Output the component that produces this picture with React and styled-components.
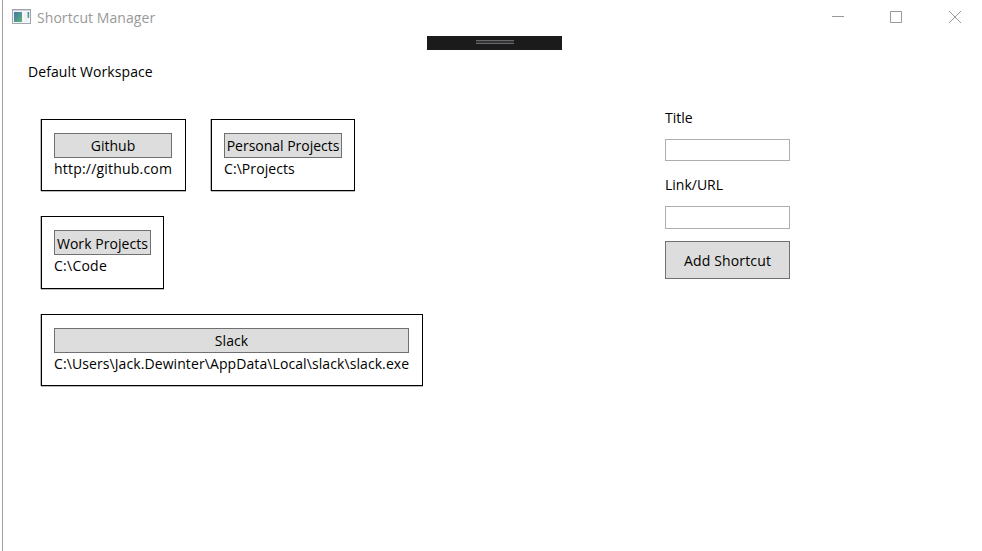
import React from 'react';
import styled, { createGlobalStyle } from 'styled-components';

const GlobalStyle = createGlobalStyle`
  *, *::before, *::after { box-sizing: border-box; }
  body { margin: 0; background: #fff; overflow: hidden; }
  body, button, input { font-family: 'Open Sans', 'Noto Sans', sans-serif; font-size: 14px; color: #000; }
`;

const Window = styled.div`
  height: 551px;
  width: 980px;
  margin-left: 2px;
  border-left: 1px solid #a0a0a0;
  display: flex;
  flex-direction: column;
`;

const TitleBar = styled.header`
  height: 36px;
  display: flex;
  align-items: flex-start;
  padding-left: 9px;
`;

const AppIcon = styled.svg`
  display: block;
  flex: none;
  width: 19px;
  height: 16px;
  margin-top: 9px;
`;

const Label = styled.span`
  display: block;
  width: max-content;
  height: 20px;
  line-height: 20px;
  white-space: pre;
  letter-spacing: ${(p) => p.$track || 0}px;
`;

const WindowTitle = styled(Label)`
  color: #999;
  margin: 8px 0 0 6px;
`;

const WindowControls = styled.div`
  display: flex;
  margin-left: auto;
  gap: 46px;
  padding: 11px 21px 0 0;
`;

const ControlIcon = styled.svg`
  display: block;
  width: 12px;
  height: 12px;
  fill: none;
  stroke: #999;

  &:last-child { margin-left: 1px; }
`;

const DebugBar = styled.div`
  width: 135px;
  height: 14px;
  margin-left: 424px;
  background: #1b1b1c;
  display: flex;
  justify-content: center;
  padding-top: 4px;
`;

const Grip = styled.div`
  width: 38px;
  height: 4px;
  background: #333337;
  border-top: 1px solid #686868;
  border-bottom: 1px solid #686868;
`;

const Content = styled.main`
  display: flex;
  flex: 1;
  padding-left: 25px;
`;

const Workspace = styled.section`
  width: 637px;
  padding-top: 12px;
`;

const CardList = styled.div`
  display: flex;
  flex-direction: column;
  gap: 25px;
  padding: 37px 0 0 13px;
`;

const CardRow = styled.div`
  display: flex;
  gap: 25px;
`;

const Card = styled.article`
  width: ${(p) => p.$width}px;
  height: ${(p) => p.$height}px;
  border: 1px solid #000;
  box-shadow: -1px 0 0 #bbb, 0 1px 0 #bbb;
  padding: 13px ${(p) => p.$inset}px 13px 12px;
`;

const LaunchButton = styled.button`
  display: flex;
  justify-content: center;
  align-items: center;
  width: 100%;
  height: 25px;
  padding: ${(p) => p.$drop || 0}px 0 0;
  border: 1px solid #707070;
  background: #ddd;
`;

const Target = styled(Label)`
  margin-top: 1px;
`;

const Form = styled.form`
  width: 125px;
  padding-top: 58px;
`;

const Field = styled.input`
  display: block;
  width: 125px;
  height: ${(p) => p.$height}px;
  margin: 11px 0 ${(p) => p.$gap}px;
  border: 1px solid #abadb3;
  background: #fff;
  padding: 0 3px;
  outline: none;
`;

const AddButton = styled(LaunchButton)`
  height: 38px;
`;

const rows = [
  [
    { name: 'Github', target: 'http://github.com', width: 145, height: 72, inset: 13, targetTrack: 0.2 },
    { name: 'Personal Projects', target: 'C:\\Projects', width: 144, height: 72, inset: 12, nameTrack: -0.02, targetTrack: 0.08 },
  ],
  [
    { name: 'Work Projects', target: 'C:\\Code', width: 123, height: 73, inset: 12, nameTrack: 0.06, targetTrack: 0.25, nameDrop: 2 },
  ],
  [
    { name: 'Slack', target: 'C:\\Users\\Jack.Dewinter\\AppData\\Local\\slack\\slack.exe', width: 382, height: 72, inset: 13, targetTrack: 0.09, nameTrack: 0.1 },
  ],
];

export default function App() {
  return (
    <>
      <GlobalStyle />
      <Window>
        <TitleBar>
          <AppIcon viewBox="0 0 19 16">
            <defs>
              <linearGradient id="pane" x1="0" y1="0" x2="1" y2="1">
                <stop offset="0" stopColor="#3f78a8" />
                <stop offset="1" stopColor="#62b37c" />
              </linearGradient>
            </defs>
            <rect x="0.5" y="0.5" width="18" height="14" fill="#f5f6f8" stroke="#a2a5ad" />
            <path d="M1 1.5h17" stroke="#d0d2d8" />
            <rect x="2" y="3" width="8" height="10" fill="url(#pane)" />
            <rect x="12" y="3" width="4" height="10" fill="#eef1f4" />
            <rect x="15.6" y="3" width="1.6" height="6" fill="url(#pane)" />
          </AppIcon>
          <WindowTitle $track={0.06}>Shortcut Manager</WindowTitle>
          <WindowControls>
            <ControlIcon viewBox="0 0 12 12"><path d="M0 5.5h12" /></ControlIcon>
            <ControlIcon viewBox="0 0 12 12"><path d="M.5 .5h11v11H.5z" /></ControlIcon>
            <ControlIcon viewBox="0 0 12 12"><path d="M0 0l12 12M12 0L0 12" /></ControlIcon>
          </WindowControls>
        </TitleBar>
        <DebugBar><Grip /></DebugBar>
        <Content>
          <Workspace>
            <Label $track={0.09}>Default Workspace</Label>
            <CardList>
              {rows.map((cards) => (
                <CardRow key={cards[0].name}>
                  {cards.map((c) => (
                    <Card key={c.name} $width={c.width} $height={c.height} $inset={c.inset}>
                      <LaunchButton type="button" $drop={c.nameDrop}>
                        <Label $track={c.nameTrack}>{c.name}</Label>
                      </LaunchButton>
                      <Target $track={c.targetTrack}>{c.target}</Target>
                    </Card>
                  ))}
                </CardRow>
              ))}
            </CardList>
          </Workspace>
          <Form>
            <Label>Title</Label>
            <Field $height={22} $gap={14} />
            <Label>Link/URL</Label>
            <Field $height={23} $gap={12} />
            <AddButton type="button" $drop={2}><Label $track={0.15}>Add Shortcut</Label></AddButton>
          </Form>
        </Content>
      </Window>
    </>
  );
}
